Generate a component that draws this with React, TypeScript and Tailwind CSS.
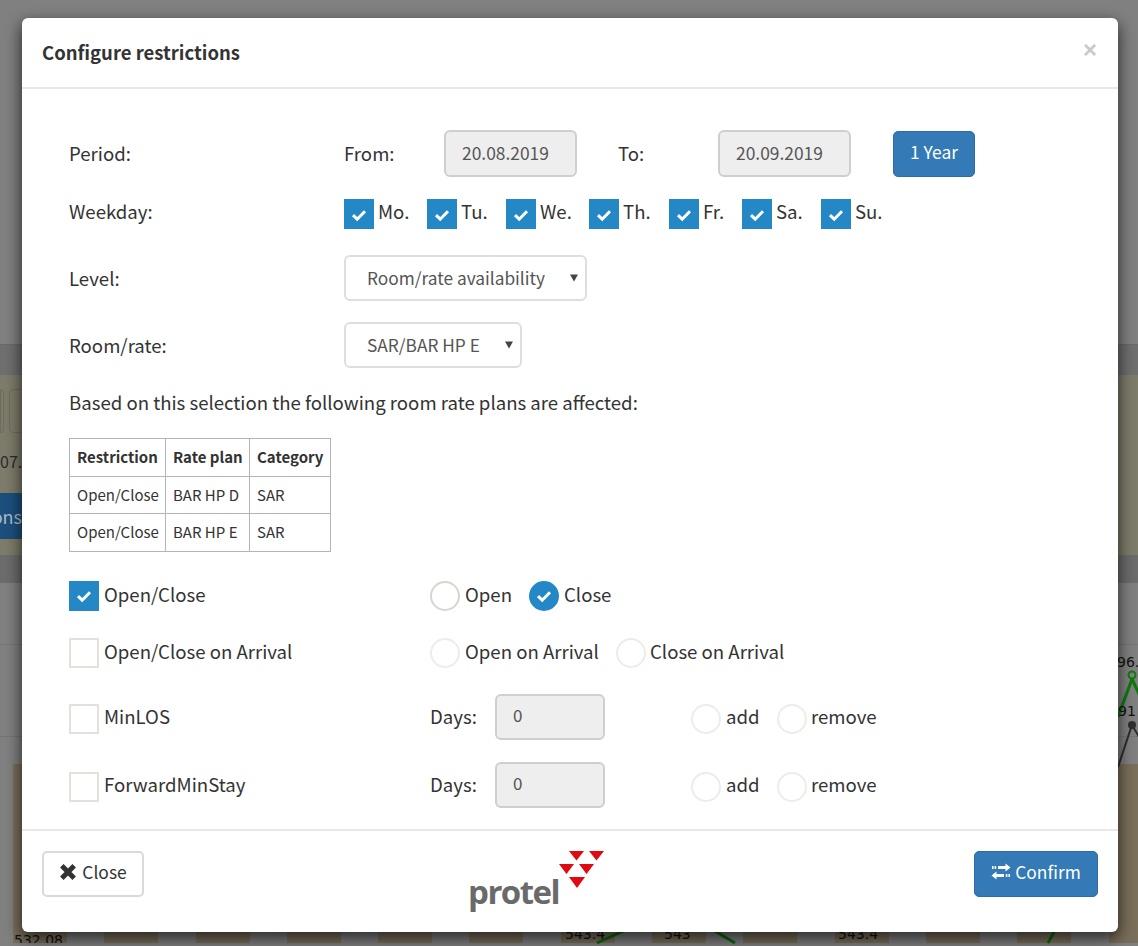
import React from "react";

const Check = ({ cls }: { cls: string }) => (
  <svg viewBox="0 0 16 16" className={cls} fill="none" stroke="#fff" strokeWidth="3">
    <path d="M2 8.2 L6.2 12.2 L14 4.2" />
  </svg>
);

const Box = ({ on }: { on?: boolean }) =>
  on ? (
    <span className="flex h-[30px] w-[30px] shrink-0 items-center justify-center bg-[#2488c6]">
      <Check cls="h-[16px] w-[16px] mt-[1px]" />
    </span>
  ) : (
    <span className="block h-[30px] w-[30px] shrink-0 border-2 border-[#e4e1dc] bg-white" />
  );

const Radio = ({ on, dark }: { on?: boolean; dark?: boolean }) =>
  on ? (
    <span className="flex h-[30px] w-[30px] shrink-0 items-center justify-center rounded-full bg-[#2488c6]">
      <Check cls="h-[16px] w-[16px] mt-[1px]" />
    </span>
  ) : (
    <span
      className={
        dark
          ? "block h-[30px] w-[30px] shrink-0 rounded-full border-2 border-[#d8d5d0] bg-white"
          : "block h-[30px] w-[30px] shrink-0 rounded-full border-2 border-[#eeecea] bg-white"
      }
    />
  );

const Caret = () => (
  <svg viewBox="0 0 10 9" className="h-[8px] w-[8px]" fill="#444">
    <path d="M0 0 H10 L5 9 Z" />
  </svg>
);

const days = [
  { t: "Mo.", c: "flex w-[83px] items-center gap-[4px]" },
  { t: "Tu.", c: "flex w-[79px] items-center gap-[4px]" },
  { t: "We.", c: "flex w-[83px] items-center gap-[4px]" },
  { t: "Th.", c: "flex w-[80px] items-center gap-[4px]" },
  { t: "Fr.", c: "flex w-[73px] items-center gap-[4px]" },
  { t: "Sa.", c: "flex w-[79px] items-center gap-[4px]" },
  { t: "Su.", c: "flex items-center gap-[4px]" },
];

const lift = "-mt-[3px]";
const lift1 = "-mt-[1px]";
const lift2 = "-mt-[7px]";
const lift3 = "-mt-[4px]";
const inputCls =
  "flex h-[47px] w-[133px] items-center rounded-[6px] border-2 border-[#cfcfcf] bg-[#eeeeee] pl-[16px] text-[17.4px] text-[#555]";
const daysInputCls =
  "flex h-[46px] w-[110px] items-center rounded-[6px] border-2 border-[#cfcfcf] bg-[#eeeeee] pl-[16px] text-[17px] text-[#555]";
const selectCls =
  "flex h-[46px] items-center justify-between rounded-[6px] border-2 border-[#dedede] bg-white pl-[21px] pr-[7px] text-[17.3px] text-[#555]";
const btnBlue =
  "flex items-center justify-center rounded-[5px] border border-[#2e6da4] bg-[#337ab7] text-[17.4px] text-white";

const th = "whitespace-nowrap border border-[#b4b4b4] px-[7px] text-left font-bold";
const td = "whitespace-nowrap border border-[#b4b4b4] px-[7px] text-left font-normal";
const num = "absolute font-['DejaVu_Sans',sans-serif] text-[14px] leading-[18px] text-[#111]";

const Bars = () => (
  <div className="flex h-full gap-[37.3px] pl-[13px]">
    {Array.from({ length: 13 }).map((_, i) => (
      <div key={i} className="h-full w-[54px] shrink-0 bg-[#7a6f5b]" />
    ))}
  </div>
);

export default function App() {
  return (
    <div className="relative h-[946px] w-[1138px] overflow-hidden bg-[#808080] font-['Noto_Sans_CJK_SC','Liberation_Sans',sans-serif] text-[#333]">
      {/* dimmed page behind the dialog */}
      <div className="h-[345px] border-b border-[#6a6a6a]" />
      <div className="h-[30px] bg-[#6f6f6f]" />
      <div className="h-[180px] bg-[#7d7c6a] pt-[14px]">
        <div className="flex gap-[5px]">
          <div className="h-[44px] w-[4px] rounded-r-[4px] border border-[#6c6c60]" />
          <div className="h-[44px] w-[30px] rounded-[4px] border border-[#6c6c60]" />
        </div>
        <div className="mt-[18px] text-[16px] leading-[20px] text-[#2b2b2b]">07.2</div>
        <div className="mt-[22px] flex h-[46px] w-[22px] items-center justify-end overflow-hidden bg-[#1c4f7c] text-[18px] text-[#a9bccd]">
          ons
        </div>
      </div>
      <div className="h-[28px] bg-[#6c6c6c]" />
      <div className="h-[62px] border-b border-[#757575]" />
      <div className="h-[92px] border-b border-[#757575]" />
      <div className="relative h-[206px]">
        <div className="h-[27px]" />
        <div className="h-[179px]">
          <Bars />
        </div>
        <svg viewBox="0 0 1138 206" className="absolute inset-0 h-[206px] w-[1138px] overflow-visible" fill="none">
          <path d="M1118 -20 L1132 -58 L1145 -30" stroke="#0e7a0e" strokeWidth="3" />
          <circle cx="1132" cy="-62" r="3.5" fill="#808080" stroke="#0e7a0e" strokeWidth="2" />
          <path d="M597 206 L632 190 M708 190 L735 206 M1048 206 L1054 195" stroke="#0c6a0c" strokeWidth="3" />
          <path d="M1118 30 L1132 -12 L1145 10" stroke="#2e2e2e" strokeWidth="2" />
          <circle cx="1132" cy="-12" r="4" fill="#2e2e2e" />
        </svg>
        <div className={`${num} left-[14px] top-[194px] h-[12px] overflow-hidden`}>532.08</div>
        <div className={`${num} left-[565px] top-[188px]`}>543.4</div>
        <div className={`${num} left-[664px] top-[188px]`}>543</div>
        <div className={`${num} left-[838px] top-[188px]`}>543.4</div>
        <div className={`${num} left-[1117px] top-[-84px] w-[21px] overflow-hidden`}>96.</div>
        <div className={`${num} left-[1118px] top-[-35px]`}>91</div>
      </div>

      {/* dialog */}
      <div className="absolute left-[22px] top-[18px] flex h-[914px] w-[1096px] flex-col rounded-[6px] bg-white shadow-[0_5px_15px_rgba(0,0,0,0.5),0_8px_16px_rgba(0,0,0,0.3)]">
        <div className="flex h-[71px] shrink-0 items-center justify-between border-b-2 border-[#e8e8e8] pl-[20px] pr-[21px]">
          <div className="-mt-[2px] text-[18.5px] font-bold leading-[28px]">Configure restrictions</div>
          <div className="mb-[6px] font-['Liberation_Sans',sans-serif] text-[24px] font-bold leading-[22px] text-[#c9c9c9]">×</div>
        </div>

        <div className="flex-1 pl-[47px] text-[18.6px] leading-[28px]">
          <div className="mt-[41px] flex h-[47px] items-center">
            <div className="-mt-[2px] w-[275px]">Period:</div>
            <div className="-mt-[2px] w-[100px]">From:</div>
            <div className={inputCls}><span className={lift1}>20.08.2019</span></div>
            <div className="-mt-[2px] ml-[41px] w-[100px]">To:</div>
            <div className={inputCls}><span className={lift1}>20.09.2019</span></div>
            <div className={`ml-[42px] h-[46px] w-[82px] ${btnBlue}`}><span className={lift}>1 Year</span></div>
          </div>

          <div className="mt-[22px] flex h-[30px] items-center">
            <div className={`w-[275px] ${lift2}`}>Weekday:</div>
            {days.map((d) => (
              <div key={d.t} className={d.c}>
                <Box on />
                <span className={lift2}>{d.t}</span>
              </div>
            ))}
          </div>

          <div className="mt-[26px] flex h-[46px] items-center">
            <div className="w-[275px]">Level:</div>
            <div className={`w-[243px] ${selectCls}`}>
              <span className={lift1}>Room/rate availability</span>
              <Caret />
            </div>
          </div>

          <div className="mt-[21px] flex h-[46px] items-center">
            <div className="w-[275px]">Room/rate:</div>
            <div className={`w-[178px] ${selectCls}`}>
              <span className={lift1}>SAR/BAR HP E</span>
              <Caret />
            </div>
          </div>

          <div className="mt-[20px]">Based on this selection the following room rate plans are affected:</div>

          <table className="mt-[22px] h-[113px] w-[262px] table-fixed border-collapse text-[15px] leading-[20px]">
            <tbody>
              <tr className="h-[37.5px]">
                <th className={`w-[96px] ${th}`}>Restriction</th>
                <th className={`w-[84px] ${th}`}>Rate plan</th>
                <th className={th}>Category</th>
              </tr>
              <tr className="h-[37.5px]">
                <td className={td}>Open/Close</td>
                <td className={td}>BAR HP D</td>
                <td className={td}>SAR</td>
              </tr>
              <tr className="h-[37.5px]">
                <td className={td}>Open/Close</td>
                <td className={td}>BAR HP E</td>
                <td className={td}>SAR</td>
              </tr>
            </tbody>
          </table>

          <div className="mt-[29px] flex h-[30px] items-center">
            <div className="flex w-[361px] items-center gap-[5px]">
              <Box on />
              <span className={lift3}>Open/Close</span>
            </div>
            <div className="flex w-[99px] items-center gap-[5px]">
              <Radio dark />
              <span className={lift3}>Open</span>
            </div>
            <div className="flex items-center gap-[5px]">
              <Radio on />
              <span className={lift3}>Close</span>
            </div>
          </div>

          <div className="mt-[27px] flex h-[30px] items-center">
            <div className="flex w-[361px] items-center gap-[5px]">
              <Box />
              <span className={lift3}>Open/Close on Arrival</span>
            </div>
            <div className="flex w-[186px] items-center gap-[5px]">
              <Radio />
              <span className={lift3}>Open on Arrival</span>
            </div>
            <div className="flex items-center gap-[4px]">
              <Radio />
              <span className={lift3}>Close on Arrival</span>
            </div>
          </div>

          {["MinLOS", "ForwardMinStay"].map((name, i) => (
            <div key={name} className={i === 0 ? "mt-[26px] flex h-[46px] items-center" : "mt-[22px] flex h-[46px] items-center"}>
              <div className="flex w-[361px] items-center gap-[5px]">
                <span className="mt-[5px]"><Box /></span>
                <span className={lift1}>{name}</span>
              </div>
              <div className={`w-[65px] ${lift1}`}>Days:</div>
              <div className={daysInputCls}><span className={lift}>0</span></div>
              <div className="ml-[86px] flex w-[86px] items-center gap-[5px]">
                <span className="mt-[5px]"><Radio /></span>
                <span className={lift1}>add</span>
              </div>
              <div className="flex items-center gap-[4px]">
                <span className="mt-[5px]"><Radio /></span>
                <span className={lift1}>remove</span>
              </div>
            </div>
          ))}
        </div>

        <div className="flex h-[103px] shrink-0 items-start justify-between border-t-2 border-[#e8e8e8] px-[20px] pt-[20px]">
          <div className="flex h-[46px] w-[102px] items-center justify-center gap-[5px] rounded-[5px] border-2 border-[#d9d9d9] bg-white text-[17.4px]">
            <svg viewBox="0 0 16 16" className="-mt-[5px] h-[18px] w-[18px]" fill="none" stroke="#333" strokeWidth="4.4">
              <path d="M2.5 2.5 L13.5 13.5 M13.5 2.5 L2.5 13.5" />
            </svg>
            <span className={lift}>Close</span>
          </div>

          <div className="relative h-[70px] w-[182px]">
            <div className="absolute left-0 top-[18px] font-['Open_Sans',sans-serif] text-[33px] font-bold leading-[46px] tracking-[-1.5px] text-[#6a6a6a]">
              protel
            </div>
            <svg viewBox="0 0 46 38" className="absolute left-[91px] top-0 h-[38px] w-[46px]" fill="#e00a12">
              <path d="M10 0 H25 L17.5 9.5 Z M30 0 H45 L37.5 9.5 Z" />
              <path d="M0 13 H15 L7.5 23 Z M20 13 H35 L27.5 23 Z" />
              <path d="M10 26 H26 L18 37 Z" />
            </svg>
          </div>

          <div className={`h-[46px] w-[124px] gap-[4px] ${btnBlue}`}>
            <svg viewBox="0 0 20 16" className="-mt-[5px] h-[17px] w-[20px]" fill="#fff">
              <path d="M19.5 4 L14.5 0 V2.5 H7 V5.5 H14.5 V8 Z" />
              <path d="M1 2.5 H2.6 V5.5 H1 Z M3.6 2.5 H5.2 V5.5 H3.6 Z" />
              <path d="M0.5 12 L5.5 8 V10.5 H13 V13.5 H5.5 V16 Z" />
              <path d="M14.8 10.5 H16.4 V13.5 H14.8 Z M17.4 10.5 H19 V13.5 H17.4 Z" />
            </svg>
            <span className={lift}>Confirm</span>
          </div>
        </div>
      </div>
    </div>
  );
}
